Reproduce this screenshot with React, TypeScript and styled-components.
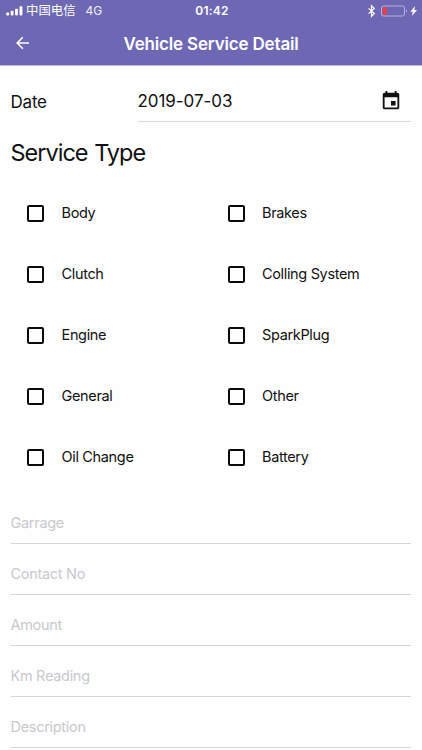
import React from "react";
import styled, { createGlobalStyle } from "styled-components";

const GlobalStyle = createGlobalStyle`
  * { box-sizing: border-box; }
  html, body { margin: 0; padding: 0; background: #fff; overflow: hidden; }
  body { font-family: Inter, "Noto Sans CJK SC", sans-serif; color: #111; }
`;

const Screen = styled.div`
  width: 422px;
  height: 750px;
  overflow: hidden;
  background: #fefefe;
`;

const Header = styled.header`
  height: 66px;
  background: #6e68b4;
  border-bottom: 1px solid #bdbadb;
  color: #fff;
`;

const StatusBar = styled.div`
  height: 22px;
  display: grid;
  grid-template-columns: 1fr auto 1fr;
  align-items: center;
  padding: 0 4px 0 6px;
  font-size: 12px;
  line-height: 22px;
`;

const StatusGroup = styled.div<{ $end?: boolean }>`
  display: flex;
  align-items: center;
  height: 22px;
  justify-content: ${(p) => (p.$end ? "flex-end" : "flex-start")};
`;

const Carrier = styled.span`
  font-family: "Noto Sans CJK SC", sans-serif;
  font-size: 12.4px;
  line-height: 20px;
  height: 22px;
  margin-left: 3px;
  white-space: nowrap;
`;

const Network = styled.span`
  margin-left: 10px;
  font-size: 12px;
  opacity: 0.9;
`;

const Clock = styled.span`
  font-weight: 600;
  font-size: 12px;
  letter-spacing: 0.2px;
`;

const NavBar = styled.div`
  height: 43px;
  display: grid;
  grid-template-columns: 40px 1fr 40px;
  align-items: center;
`;

const BackButton = styled.button`
  border: 0;
  padding: 0 0 2px 12.5px;
  background: none;
  display: flex;
`;

const Title = styled.h1`
  margin: 0;
  text-align: center;
  font-size: 17px;
  font-weight: 600;
  line-height: 24px;
  letter-spacing: -0.17px;
`;

const Content = styled.main`
  padding: 0 11px 0 10.5px;
`;

const DateRow = styled.div`
  display: flex;
  height: 56px;
  font-size: 17px;
  line-height: 24px;
`;

const DateLabel = styled.span`
  width: 127px;
  padding-top: 24px;
  letter-spacing: -0.2px;
`;

const DateInput = styled.div`
  flex: 1;
  display: flex;
  justify-content: space-between;
  padding: 23px 9px 0 0;
  border-bottom: 1px solid #d9d9d9;

  svg { margin-top: 1px; }
`;

const DateValue = styled.span`
  letter-spacing: -0.05px;
`;

const SectionTitle = styled.h2`
  margin: 16px 0 0;
  font-size: 23.5px;
  font-weight: 400;
  line-height: 30px;
  letter-spacing: -1px;
  word-spacing: 1px;
`;

const Options = styled.div`
  display: grid;
  grid-template-columns: 200.5px 1fr;
  grid-auto-rows: 61px;
  margin-top: 15px;
`;

const Option = styled.label`
  display: flex;
  align-items: center;
  padding-left: 16.5px;
  font-size: 14.5px;
  letter-spacing: -0.34px;
`;

const OptionText = styled.span`
  padding-bottom: 2px;
`;

const Box = styled.span`
  width: 17px;
  height: 17px;
  border: 2px solid #0a0a0a;
  border-radius: 2px;
  margin-right: 17.5px;
  flex: none;
`;

const Field = styled.input`
  display: block;
  width: 100%;
  height: 51px;
  border: 0;
  border-bottom: 1px solid #d6d6d8;
  border-radius: 0;
  outline: 0;
  padding: 8px 0 0;
  background: transparent;
  font: 14.5px Inter, sans-serif;
  letter-spacing: -0.3px;
  &::placeholder { color: #c9c9ce; opacity: 1; }
`;

const Fields = styled.form`
  margin-top: 5px;
`;

const services = [
  "Body", "Brakes", "Clutch", "Colling System", "Engine",
  "SparkPlug", "General", "Other", "Oil Change", "Battery",
];
const fields = ["Garrage", "Contact No", "Amount", "Km Reading", "Description"];

const SignalIcon = () => (
  <svg width="17" height="10" viewBox="0 0 17 10" fill="#fff">
    <rect x="0.3" y="6.4" width="2.8" height="3" rx="0.8" />
    <rect x="4.7" y="4.8" width="2.8" height="4.6" rx="0.8" />
    <rect x="9.1" y="2.8" width="2.8" height="6.6" rx="0.8" />
    <rect x="13.5" y="0.2" width="2.9" height="9.2" rx="0.8" />
  </svg>
);

const PowerIcons = () => (
  <svg width="52" height="14" viewBox="0 0 52 14" fill="none">
    <path d="M2.6 4.4 8.3 9.6 5.5 12.3V1.7l2.8 2.7-5.7 5.2" stroke="#fff" strokeWidth="1.2" />
    <rect x="15.5" y="2" width="23" height="10" rx="2" stroke="#b5b0dc" strokeWidth="1" />
    <path d="M40 5.2c1.4.6 1.4 3 0 3.6z" fill="#b5b0dc" />
    <rect x="16.8" y="3.3" width="3.8" height="7.4" rx="0.8" fill="#f83b42" />
    <path d="m49.2 2-5 5.7h2.7L45.8 12l5.2-6h-2.8z" fill="#fff" />
  </svg>
);

const BackIcon = () => (
  <svg width="20" height="20" viewBox="0 0 20 20" fill="none" stroke="#fff" strokeWidth="1.6">
    <path d="M16 10H4.4M9.8 4.3 4.2 10l5.6 5.7" />
  </svg>
);

const CalendarIcon = () => (
  <svg width="22" height="22" viewBox="0 0 24 24" fill="#111">
    <path d="M17 12h-5v5h5v-5zM16 1v2H8V1H6v2H5c-1.11 0-1.99.9-1.99 2L3 19c0 1.1.89 2 2 2h14c1.1 0 2-.9 2-2V5c0-1.1-.9-2-2-2h-1V1h-2zm3 18H5V8h14v11z" />
  </svg>
);

export default function App() {
  return (
    <>
      <GlobalStyle />
      <Screen>
        <Header>
          <StatusBar>
            <StatusGroup>
              <SignalIcon />
              <Carrier>中国电信</Carrier>
              <Network>4G</Network>
            </StatusGroup>
            <Clock>01:42</Clock>
            <StatusGroup $end><PowerIcons /></StatusGroup>
          </StatusBar>
          <NavBar>
            <BackButton type="button" aria-label="Back"><BackIcon /></BackButton>
            <Title>Vehicle Service Detail</Title>
          </NavBar>
        </Header>
        <Content>
          <DateRow>
            <DateLabel>Date</DateLabel>
            <DateInput>
              <DateValue>2019-07-03</DateValue>
              <CalendarIcon />
            </DateInput>
          </DateRow>
          <SectionTitle>Service Type</SectionTitle>
          <Options>
            {services.map((name) => (
              <Option key={name}><Box /><OptionText>{name}</OptionText></Option>
            ))}
          </Options>
          <Fields>
            {fields.map((name) => <Field key={name} placeholder={name} />)}
          </Fields>
        </Content>
      </Screen>
    </>
  );
}
